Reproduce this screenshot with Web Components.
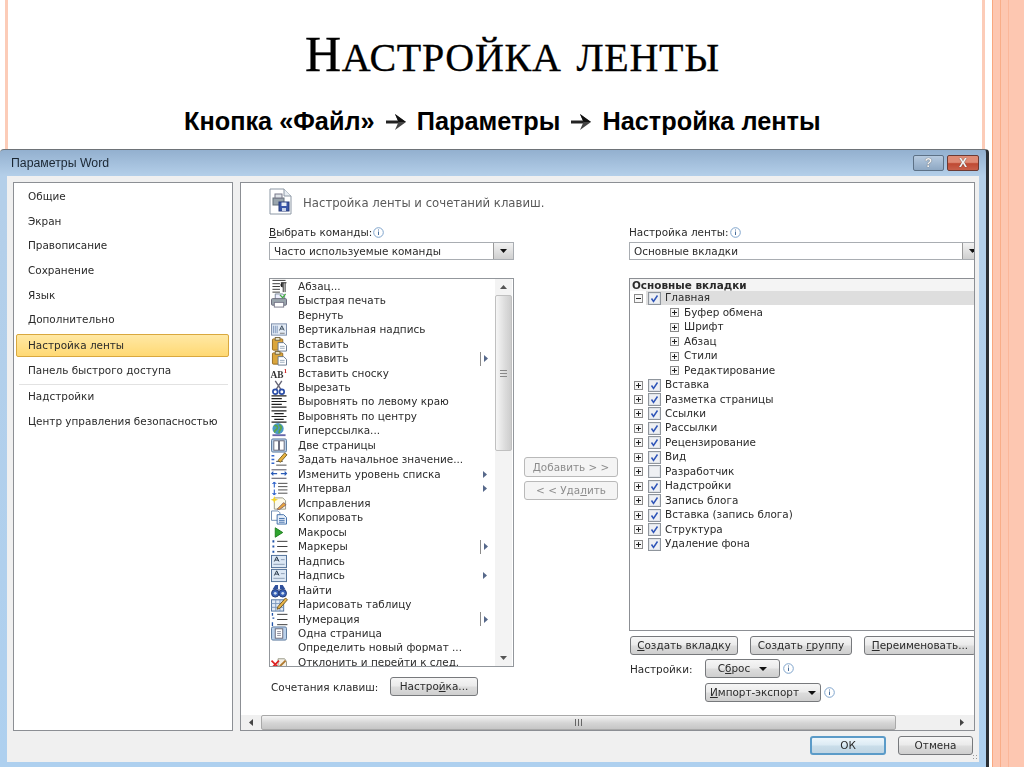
<!DOCTYPE html>
<html lang="ru">
  <head>
    <meta charset="UTF-8" />
    <title>Настройка ленты</title>
    <style>
      html, body { margin: 0; padding: 0; background: #fff; }
    </style>
  </head>
  <body>
    <slide-page>
      <span slot="title"><span style="font-size: 50px">Н</span><span style="font-size: 57px; font-variant: small-caps">астройка ленты</span></span>
      <span slot="sub">Кнопка «Файл» <slide-arrow></slide-arrow> Параметры <slide-arrow></slide-arrow> Настройка ленты</span>
      <word-dialog heading="Параметры Word">
        <side-nav slot="nav">
          <nav-item>Общие</nav-item>
          <nav-item>Экран</nav-item>
          <nav-item>Правописание</nav-item>
          <nav-item>Сохранение</nav-item>
          <nav-item>Язык</nav-item>
          <nav-item>Дополнительно</nav-item>
          <nav-item active>Настройка ленты</nav-item>
          <nav-item>Панель быстрого доступа</nav-item>
          <nav-rule></nav-rule>
          <nav-item>Надстройки</nav-item>
          <nav-item>Центр управления безопасностью</nav-item>
        </side-nav>

        <ribbon-panel slot="main">
          <div slot="left">
            <field-label><u>В</u>ыбрать команды:</field-label>
            <combo-box>Часто используемые команды</combo-box>
            <cmd-list>
              <cmd-item icon="para">Абзац...</cmd-item>
              <cmd-item icon="print">Быстрая печать</cmd-item>
              <cmd-item>Вернуть</cmd-item>
              <cmd-item icon="vtext">Вертикальная надпись</cmd-item>
              <cmd-item icon="paste">Вставить</cmd-item>
              <cmd-item icon="paste" sub="sep">Вставить</cmd-item>
              <cmd-item icon="note">Вставить сноску</cmd-item>
              <cmd-item icon="cut">Вырезать</cmd-item>
              <cmd-item icon="left">Выровнять по левому краю</cmd-item>
              <cmd-item icon="center">Выровнять по центру</cmd-item>
              <cmd-item icon="link">Гиперссылка...</cmd-item>
              <cmd-item icon="twopage">Две страницы</cmd-item>
              <cmd-item icon="startval">Задать начальное значение...</cmd-item>
              <cmd-item icon="level" sub="arrow">Изменить уровень списка</cmd-item>
              <cmd-item icon="spacing" sub="arrow">Интервал</cmd-item>
              <cmd-item icon="track">Исправления</cmd-item>
              <cmd-item icon="copy">Копировать</cmd-item>
              <cmd-item icon="macro">Макросы</cmd-item>
              <cmd-item icon="bullets" sub="sep">Маркеры</cmd-item>
              <cmd-item icon="box">Надпись</cmd-item>
              <cmd-item icon="box" sub="arrow">Надпись</cmd-item>
              <cmd-item icon="find">Найти</cmd-item>
              <cmd-item icon="table">Нарисовать таблицу</cmd-item>
              <cmd-item icon="numbers" sub="sep">Нумерация</cmd-item>
              <cmd-item icon="onepage">Одна страница</cmd-item>
              <cmd-item>Определить новый формат ...</cmd-item>
              <cmd-item icon="reject">Отклонить и перейти к след.</cmd-item>
            </cmd-list>
            <key-row>
              <span>Сочетания клавиш:</span>
              <win-btn style="width: 88px; height: 19px">Настро<u>й</u>ка...</win-btn>
            </key-row>
          </div>

          <div slot="middle">
            <win-btn disabled style="width: 94px; height: 20px"><u>Д</u>обавить &gt; &gt;</win-btn>
            <win-btn disabled style="width: 94px; height: 19px">&lt; &lt; Уда<u>л</u>ить</win-btn>
          </div>

          <div slot="right">
            <field-label>Настройка ленты:</field-label>
            <combo-box>Основные вкладки</combo-box>
            <ribbon-tree heading="Основные вкладки">
              <tree-row open checked current>Главная</tree-row>
              <tree-row child>Буфер обмена</tree-row>
              <tree-row child>Шрифт</tree-row>
              <tree-row child>Абзац</tree-row>
              <tree-row child>Стили</tree-row>
              <tree-row child>Редактирование</tree-row>
              <tree-row checked>Вставка</tree-row>
              <tree-row checked>Разметка страницы</tree-row>
              <tree-row checked>Ссылки</tree-row>
              <tree-row checked>Рассылки</tree-row>
              <tree-row checked>Рецензирование</tree-row>
              <tree-row checked>Вид</tree-row>
              <tree-row>Разработчик</tree-row>
              <tree-row checked>Надстройки</tree-row>
              <tree-row checked>Запись блога</tree-row>
              <tree-row checked>Вставка (запись блога)</tree-row>
              <tree-row checked>Структура</tree-row>
              <tree-row checked>Удаление фона</tree-row>
            </ribbon-tree>
            <btn-row>
              <win-btn style="width: 108px; height: 19px"><u>С</u>оздать вкладку</win-btn>
              <win-btn style="width: 102px; height: 19px">Создать <u>г</u>руппу</win-btn>
              <win-btn style="width: 112px; height: 19px"><u>П</u>ереименовать...</win-btn>
            </btn-row>
            <custom-row>
              <span>Настройки:</span>
              <win-btn drop style="width: 75px; height: 19px">С<u>б</u>рос</win-btn>
              <info-mark></info-mark>
            </custom-row>
            <custom-row second>
              <win-btn drop style="width: 116px; height: 19px"><u>И</u>мпорт-экспорт</win-btn>
              <info-mark></info-mark>
            </custom-row>
          </div>
        </ribbon-panel>

        <win-btn slot="foot" default style="width: 76px; height: 19px">ОК</win-btn>
        <win-btn slot="foot" style="width: 75px; height: 19px">Отмена</win-btn>
      </word-dialog>
    </slide-page>

    <script>
      const ICONS = {
        para: '<path d="M2 1.500h14M2 5h8M2 8h8M2 11h8M2 14h8" stroke="#333"/><path d="M11 4h6M13.500 4v10M15.500 4v10" stroke="#222"/><path d="M13 4a2.400 2.400 0 0 0 0 5z" fill="#222"/>',
        print: '<path d="M5 1h8l2 2v4H5z" fill="#eef" stroke="#789"/><rect x="1" y="6" width="16" height="7" rx="1" fill="#9aa5ad" stroke="#667"/><rect x="4" y="10" width="10" height="5" fill="#fff" stroke="#778"/><path d="M10 2l3 3 3-4" fill="none" stroke="#4a4" stroke-width="1.400"/>',
        vtext: '<rect x="1" y="2" width="16" height="12" fill="#e4ecf6" stroke="#7a8ca8"/><path d="M3 4v8M5 4v8M7 4v8" stroke="#7a92b8"/><path d="M9.500 9l2.500-5 2.500 5M10.500 7.500h3" fill="none" stroke="#345"/><path d="M10 12h5" stroke="#777"/>',
        paste: '<rect x="2" y="2" width="11" height="12" rx="1" fill="#dba63c" stroke="#94691e"/><rect x="5" y="0.500" width="5" height="3" fill="#e8e2c8" stroke="#7a6a40"/><path d="M8 6h6l3 3v6H8z" fill="#fff" stroke="#66788e"/><path d="M10 10h5M10 12h5" stroke="#9ab"/>',
        note: '<text x="0" y="13" font-family="Liberation Serif" font-size="10" font-weight="bold" fill="#333">AB</text><text x="14" y="7" font-family="Liberation Serif" font-size="7" font-weight="bold" fill="#c22">1</text>',
        cut: '<path d="M5 1l6 9M12 1l-6 9" stroke="#667" stroke-width="1.500"/><circle cx="5" cy="12.500" r="2.500" fill="none" stroke="#2b4ea8" stroke-width="1.800"/><circle cx="12" cy="12.500" r="2.500" fill="none" stroke="#2b4ea8" stroke-width="1.800"/>',
        left: '<path d="M1 2h16M1 5h11M1 8h16M1 11h11M1 14h16" stroke="#222" stroke-width="1.300"/>',
        center: '<path d="M1 2h16M4 5h10M1 8h16M4 11h10M1 14h16" stroke="#222" stroke-width="1.300"/>',
        link: '<circle cx="8" cy="6" r="6" fill="#4a9ac4"/><path d="M4 3c3-1 4 1 3 3S3 8 5 10M9 2c2 1 3 2 2 4s-2 2-2 5" fill="none" stroke="#5da648" stroke-width="1.800"/><path d="M2 13h14" stroke="#66a" stroke-width="2"/>',
        twopage: '<rect x="1" y="1" width="16" height="14" rx="1.500" fill="#b9d0ea" stroke="#58769c"/><rect x="3.500" y="3" width="5" height="10" fill="#fff" stroke="#667"/><rect x="9.500" y="3" width="5" height="10" fill="#fff" stroke="#667"/>',
        startval: '<path d="M1 4h3M1 8h3M1 12h3" stroke="#36c" stroke-width="1.500"/><path d="M6 14h11M6 10h7" stroke="#444"/><path d="M8 9l7-8 2.500 2-7 8z" fill="#e6b13f" stroke="#7a6020"/>',
        level: '<path d="M1 3h16M1 12h16" stroke="#445"/><path d="M7 7H1M3 5L1 7l2 2M11 7h6M15 5l2 2-2 2" fill="none" stroke="#2b5cb8" stroke-width="1.200"/>',
        spacing: '<path d="M4 1v6M4 9v6" stroke="#36c" stroke-width="1.200"/><path d="M2 3l2-2 2 2M2 13l2 2 2-2" fill="#36c" stroke="#36c"/><path d="M8 2.500h10M8 6h10M8 9.500h10M8 13h10" stroke="#444"/>',
        track: '<path d="M4 2h9l3 3v9H4z" fill="#fdfbea" stroke="#998"/><path d="M4 0l1 3 3 1-3 1-1 3-1-3-3-1 3-1z" fill="#f4d324"/><path d="M7 14l7-7 2.500 2.500-7 5z" fill="#e8a53c" stroke="#866"/>',
        copy: '<path d="M1 1h7l2 2v8H1z" fill="#fff" stroke="#6c8ab0"/><path d="M7 5h7l3 3v7H7z" fill="#e6effa" stroke="#3e6ca8"/><path d="M9 9h6M9 11h6M9 13h6" stroke="#3e6ca8"/>',
        macro: '<path d="M5 3l8 5-8 5z" fill="#2fa52f" stroke="#1d7d1d"/>',
        bullets: '<path d="M2 2.500h2M2 8h2M2 13.500h2" stroke="#25a" stroke-width="2.200"/><path d="M7 2.500h11M7 8h11M7 13.500h11" stroke="#333"/>',
        box: '<rect x="1" y="1.500" width="16" height="13" fill="#dce8f5" stroke="#4c6c94"/><path d="M4 8l2.500-5L9 8M5 6.500h3" fill="none" stroke="#234"/><path d="M11 6h4M3 11h12" stroke="#8a9cb4"/>',
        find: '<path d="M2 7l3-5h3v6h2V2h3l3 5z" fill="#2e4f9c"/><circle cx="5" cy="11" r="4" fill="#3a62b8" stroke="#1c3470"/><circle cx="13" cy="11" r="4" fill="#3a62b8" stroke="#1c3470"/><circle cx="5" cy="11" r="1.500" fill="#cde"/><circle cx="13" cy="11" r="1.500" fill="#cde"/>',
        table: '<rect x="1" y="3" width="13" height="12" fill="#e0e9f5" stroke="#4e6f9c"/><path d="M1 7h13M1 11h13M5.500 3v12M10 3v12" stroke="#7c97bc"/><path d="M8 10l8-9 2 2-8 9-3 1z" fill="#eab54a" stroke="#6e5520"/>',
        numbers: '<path d="M2 1v3M2 6.500h2M2 11v4" stroke="#25a" stroke-width="1.400"/><path d="M7 2.500h11M7 8h11M7 13.500h11" stroke="#333"/>',
        onepage: '<rect x="1" y="1" width="16" height="14" rx="1.500" fill="#b9d0ea" stroke="#58769c"/><rect x="5" y="3" width="8" height="10" fill="#fff" stroke="#667"/><path d="M7 6h4M7 8h4M7 10h4" stroke="#889"/>',
        reject: '<path d="M8 4h7l2 3v7H8z" fill="#f4f0e6" stroke="#998"/><path d="M10 12l6-6" stroke="#b07a30" stroke-width="2"/><path d="M1 6l8 8M9 6l-8 8" stroke="#d22" stroke-width="1.800"/>',
      }

      function define(name, css, html, setup) {
        customElements.define(
          name,
          class extends HTMLElement {
            constructor() {
              super()
              let root = this.attachShadow({ mode: 'open' })
              root.innerHTML = `<style>${css}</style>${html}`
              if (setup) setup(this, root)
            }
          },
        )
      }

      define(
        'slide-page',
        `:host {
          display: block;
          width: 1024px;
          height: 767px;
          overflow: hidden;
          background: linear-gradient(90deg, #fff 0 5px, #fcccb8 5px 8px, #fff 8px 982px, #fcccb8 982px 985px, #fff 985px 992px,
            #f9a87f 992px 993px, #fdc7b1 993px 1000px, #f9ad88 1000px 1001px, #fdc7b1 1001px 1008px, #fbb79a 1008px 1009px, #fdc7b1 1009px 1024px);
        }
        .title {
          height: 83px;
          padding-top: 26px;
          box-sizing: border-box;
          padding-left: 305px;
          font: 48px/52px "Liberation Serif", serif;
          letter-spacing: 0.7px;
          -webkit-text-stroke: 0.3px #000;
          color: #000;
          white-space: nowrap;
        }
        .sub {
          height: 66px;
          padding: 24px 0 0 184px;
          box-sizing: border-box;
          font: bold 25.3px/28px "Liberation Sans", sans-serif;
          color: #000;
          white-space: nowrap;
        }
        `,
        `<div class="title"><slot name="title"></slot></div>
         <div class="sub"><slot name="sub"></slot></div>
         <slot></slot>`,
      )

      define(
        'slide-arrow',
        `:host { display: inline-block; width: 22px; height: 20px; margin: 0 3px; vertical-align: -2px; }
         svg { display: block; }`,
        `<svg width="22" height="20" viewBox="0 0 22 20"><path d="M1 8.500h13v3H1z" fill="#222"/><path d="M10 2l11 8-11 8 3.500-8z" fill="#444"/><path d="M10 2l11 8H13.500z" fill="#111"/></svg>`,
      )

      define(
        'word-dialog',
        `:host {
          display: flex;
          flex-direction: column;
          box-sizing: border-box;
          width: 989px;
          height: 618px;
          border-top: 1px solid #6e7378;
          border-right: 3px solid #2a2e33;
          border-radius: 4px 4px 0 0;
          background: linear-gradient(180deg, #93b0cf 0, #b4cfe9 26px, #aed0ef 100%);
          font: 10.45px/14px "DejaVu Sans", sans-serif;
          color: #2a2a2a;
          filter: blur(0.35px);
        }
        .bar { height: 26px; flex: none; display: flex; align-items: center; padding-left: 11px; }
        .cap { font: 12.3px "Liberation Sans", sans-serif; color: #1b2733; flex: 1; }
        .ctl { display: flex; gap: 3px; margin: 0 7px 1px 0; }
        .ctl span {
          height: 14px; display: flex; align-items: center; justify-content: center;
          font: bold 12px "Liberation Sans", sans-serif; color: #f4f4f4;
          border: 1px solid #5d7186; border-radius: 2px;
          text-shadow: 0 0 1px #333;
        }
        .help { width: 29px; background: linear-gradient(180deg, #b7cbe0, #8ea8c3); }
        .close { width: 30px; background: linear-gradient(180deg, #df8b75 0 45%, #bf4a33 55%, #c8604a); border-color: #6c3a33 !important; }
        .body { flex: 1; margin: 0 7px 5px 7px; background: #f0f0f0; display: flex; flex-direction: column; min-height: 0; }
        .cols { flex: none; height: 549px; margin: 6px 4px 0 6px; display: flex; gap: 7px; }
        .foot { flex: 1; display: flex; justify-content: flex-end; gap: 12px; padding: 5px 6px 0 0; position: relative; }
        .grip { position: absolute; right: 0; bottom: 1px; width: 7px; height: 7px;
          background: radial-gradient(circle, #999 0 .8px, transparent 1px) 0 0 / 3px 3px; }
        `,
        `<div class="bar"><span class="cap"></span><div class="ctl"><span class="help">?</span><span class="close">X</span></div></div>
         <div class="body">
           <div class="cols"><slot name="nav"></slot><slot name="main"></slot></div>
           <div class="foot"><slot name="foot"></slot><div class="grip"></div></div>
         </div>`,
        (el, root) => {
          root.querySelector('.cap').textContent = el.getAttribute('heading')
        },
      )

      define(
        'side-nav',
        `:host {
          display: block; flex: none; box-sizing: border-box;
          width: 220px; height: 549px; padding: 2px;
          background: #fff; border: 1px solid #8c8f94;
        }`,
        `<slot></slot>`,
      )

      define(
        'nav-item',
        `:host {
          display: flex; align-items: center; box-sizing: border-box;
          height: 24.6px; padding: 0 0 2px 12px; white-space: nowrap;
        }
        :host([active]) {
          height: 23px; margin: 1px 1px 2.500px 0; padding: 0 0 0 11px; border-radius: 2px;
          background: linear-gradient(180deg, #ffe8a4, #ffd974);
          border: 1px solid #d9a83e;
        }`,
        `<span><slot></slot></span>`,
      )

      define(
        'nav-rule',
        `:host { display: block; height: 1px; margin: 0 2px 0 3px; background: #e2e2e2; }`,
        ``,
      )

      define(
        'ribbon-panel',
        `:host {
          display: flex; flex-direction: column; flex: 1; min-width: 0; box-sizing: border-box;
          height: 549px; background: #fff; border: 1px solid #8c8f94; overflow: hidden;
        }
        .view { flex: 1; min-height: 0; overflow: hidden; padding: 5px 0 0 28px; }
        .head { display: flex; align-items: flex-end; height: 27px; gap: 11px; margin-bottom: 10px; }
        .head svg { flex: none; }
        .head span { font-size: 11.7px; line-height: 16px; color: #5a5a5a; padding-bottom: 4px; }
        .cols { display: flex; }
        ::slotted([slot=left]) { width: 245px; flex: none; }
        ::slotted([slot=middle]) { width: 94px; flex: none; margin: 232px 11px 0 10px; display: flex; flex-direction: column; gap: 4px; }
        ::slotted([slot=right]) { width: 354px; flex: none; }
        .hbar { flex: none; height: 15px; display: flex; align-items: stretch; background: #f0f0f0; }
        .hbar .arr { width: 20px; display: flex; align-items: center; justify-content: center; }
        .hbar .thumb {
          width: 635px; box-sizing: border-box; border: 1px solid #a9a9a9; border-radius: 2px;
          background: linear-gradient(180deg, #f4f4f4, #d4d4d4 55%, #c6c6c6);
          display: flex; align-items: center; justify-content: center;
        }
        .hbar .end { flex: 1; display: flex; align-items: center; justify-content: flex-end; padding-right: 9px; }
        `,
        `<div class="view">
           <div class="head">
             <svg width="23" height="27" viewBox="0 0 23 27"><path d="M1 1h14l7 7v18H1z" fill="#fff" stroke="#8d98a5"/><path d="M15 1v7h7" fill="#e8edf2" stroke="#8d98a5"/><rect x="4" y="10" width="11" height="7" fill="#9aa5ad" stroke="#66727c"/><rect x="6" y="6" width="7" height="4" fill="#dfe4e8" stroke="#778"/><rect x="10" y="14" width="10" height="9" fill="#3a56a8" stroke="#263a78"/><rect x="12.500" y="14.500" width="5" height="3.500" fill="#e9eef7"/><rect x="13" y="20" width="4" height="3" fill="#c8d2e8"/></svg>
             <span>Настройка ленты и сочетаний клавиш.</span>
           </div>
           <div class="cols"><slot name="left"></slot><slot name="middle"></slot><slot name="right"></slot></div>
         </div>
         <div class="hbar">
           <div class="arr"><svg width="5" height="7"><path d="M4 0v7L0 3.500z" fill="#444"/></svg></div>
           <div class="thumb"><svg width="7" height="7"><path d="M.5 0v7M3.500 0v7M6.500 0v7" stroke="#666"/></svg></div>
           <div class="end"><svg width="5" height="7"><path d="M0 0v7l4-3.500z" fill="#444"/></svg></div>
         </div>`,
      )

      define(
        'info-mark',
        `:host { display: inline-flex; width: 11px; height: 11px; flex: none; }`,
        `<svg width="11" height="11" viewBox="0 0 11 11"><circle cx="5.500" cy="5.500" r="4.800" fill="#fff" stroke="#7fa4cc"/><path d="M5.500 2.500v1M5.500 4.500v3.500" stroke="#4a6f9c"/></svg>`,
      )

      define(
        'field-label',
        `:host { display: flex; align-items: center; gap: 1px; height: 14px; margin-bottom: 3px; white-space: nowrap; }`,
        `<span><slot></slot></span><info-mark></info-mark>`,
      )

      define(
        'combo-box',
        `:host {
          display: flex; align-items: center; justify-content: space-between; box-sizing: border-box;
          height: 18px; margin-bottom: 18px; padding: 0 0 0 4px;
          background: #fff; border: 1px solid #a9adb2; white-space: nowrap;
        }
        .btn {
          width: 19px; height: 16px; flex: none; display: flex; align-items: center; justify-content: center;
          background: linear-gradient(180deg, #f2f2f2, #cfcfcf); border-left: 1px solid #9a9a9a;
        }`,
        `<span><slot></slot></span><div class="btn"><svg width="7" height="4"><path d="M0 0h7L3.500 4z" fill="#111"/></svg></div>`,
      )

      define(
        'cmd-list',
        `:host {
          display: flex; box-sizing: border-box; width: 245px; height: 389px; margin-bottom: 10px;
          background: #fff; border: 1px solid #93979c; overflow: hidden;
        }
        .rows { flex: 1; min-width: 0; }
        .bar { width: 17px; flex: none; margin-right: 1px; background: #f3f3f3; display: flex; flex-direction: column; }
        .arr { height: 16px; display: flex; align-items: center; justify-content: center; flex: none; }
        .thumb {
          height: 156px; flex: none; box-sizing: border-box; border: 1px solid #c0c0c0; border-radius: 2px;
          background: linear-gradient(90deg, #f6f6f6, #dcdcdc 60%, #cdcdcd);
          display: flex; align-items: center; justify-content: center;
        }
        .fill { flex: 1; }
        `,
        `<div class="rows"><slot></slot></div>
         <div class="bar">
           <div class="arr"><svg width="7" height="4"><path d="M0 4h7L3.500 0z" fill="#555"/></svg></div>
           <div class="thumb"><svg width="7" height="7"><path d="M0 .5h7M0 3.500h7M0 6.500h7" stroke="#888"/></svg></div>
           <div class="fill"></div>
           <div class="arr"><svg width="7" height="4"><path d="M0 0h7L3.500 4z" fill="#555"/></svg></div>
         </div>`,
      )

      define(
        'cmd-item',
        `:host { display: flex; align-items: center; height: 14.47px; white-space: nowrap; }
        .ico { width: 18px; height: 15px; flex: none; margin-right: 10px; overflow: visible; }
        .txt { flex: 1; margin-bottom: 1px; }
        .sub { width: 18px; height: 14px; flex: none; display: flex; align-items: center; padding-left: 6px; box-sizing: border-box; gap: 3px; }
        .sep { width: 1px; height: 14px; background: #8a8a8a; margin-left: -3px; }
        `,
        `<svg class="ico" viewBox="0 0 18 16"></svg><span class="txt"><slot></slot></span><span class="sub"></span>`,
        (el, root) => {
          root.querySelector('.ico').innerHTML = ICONS[el.getAttribute('icon')] || ''
          let sub = el.getAttribute('sub')
          if (sub) {
            root.querySelector('.sub').innerHTML =
              (sub === 'sep' ? '<span class="sep"></span>' : '') +
              '<svg width="4" height="7"><path d="M0 0v7l4-3.500z" fill="#56688a"/></svg>'
          }
        },
      )

      define(
        'key-row',
        `:host { display: flex; align-items: center; margin-left: 2px; white-space: nowrap; }
         ::slotted(span) { width: 119px; flex: none; }`,
        `<slot></slot>`,
      )

      define(
        'win-btn',
        `:host {
          display: inline-flex; align-items: center; justify-content: center; flex: none; box-sizing: border-box;
          border: 1px solid #77797c; border-radius: 3px; white-space: nowrap;
          background: linear-gradient(180deg, #f6f6f6, #ebebeb 45%, #dcdcdc 55%, #cfcfcf);
        }
        :host([disabled]) { color: #8c8c8c; border-color: #b9b9b9; background: #f4f4f4; }
        :host([default]) { border: 2px solid #5b9bc8; border-radius: 3px; background: linear-gradient(180deg, #eef6fb, #dcebf4 45%, #c9dde9 55%, #c0d5e3); }
        span { padding-bottom: 1px; }
        svg { margin-left: 9px; display: none; }
        :host([drop]) svg { display: block; }
        `,
        `<span><slot></slot></span><svg width="8" height="4"><path d="M0 0h8L4 4z" fill="#111"/></svg>`,
      )

      define(
        'ribbon-tree',
        `:host {
          display: block; box-sizing: border-box; width: 354px; height: 353px; margin-bottom: 5px;
          background: #fff; border: 1px solid #8c8f94; border-right: 0; overflow: hidden;
        }
        .hd { height: 12px; line-height: 12px; padding-left: 2px; font-weight: bold; background: #f4f4f4; }
        `,
        `<div class="hd"></div><slot></slot>`,
        (el, root) => {
          root.querySelector('.hd').textContent = el.getAttribute('heading')
        },
      )

      define(
        'tree-row',
        `:host { display: flex; align-items: center; height: 14.47px; white-space: nowrap; padding-left: 4px; }
        :host([child]) { padding-left: 40px; }
        .exp { width: 9px; height: 9px; flex: none; margin-right: 5px; }
        .line { display: flex; align-items: center; flex: 1; height: 100%; }
        :host([current]) .line { background: #dedede; margin-left: -2px; padding-left: 2px; }
        .chk { width: 13px; height: 13px; flex: none; margin-right: 4px; }
        :host([child]) .chk { display: none; }
        .txt { margin-bottom: 2px; }
        `,
        `<svg class="exp" width="9" height="9" viewBox="0 0 9 9"><rect x=".5" y=".5" width="8" height="8" fill="#f7f7f7" stroke="#8a8a8a"/><path class="m" d="M2 4.500h5M4.500 2v5" stroke="#222"/></svg>
         <span class="line">
           <svg class="chk" width="13" height="13" viewBox="0 0 13 13"><rect x=".5" y=".5" width="12" height="12" fill="#dfe3e8" stroke="#8f959c"/><rect x="2" y="2" width="9" height="9" fill="#eef0f3"/><path class="t" d="M3.500 6.500l2 3 4-6" fill="none" stroke="#2f55b8" stroke-width="1.500"/></svg>
           <span class="txt"><slot></slot></span>
         </span>`,
        (el, root) => {
          if (el.hasAttribute('open')) root.querySelector('.m').setAttribute('d', 'M2 4.500h5')
          if (!el.hasAttribute('checked')) root.querySelector('.t').remove()
        },
      )

      define(
        'btn-row',
        `:host { display: flex; gap: 12px; margin: 0 0 4px 1px; }`,
        `<slot></slot>`,
      )

      define(
        'custom-row',
        `:host { display: flex; align-items: center; gap: 3px; margin: 0 0 5px 1px; white-space: nowrap; }
         ::slotted(span) { width: 72px; flex: none; }
         :host([second]) { margin-left: 76px; }`,
        `<slot></slot>`,
      )
    </script>
  </body>
</html>
